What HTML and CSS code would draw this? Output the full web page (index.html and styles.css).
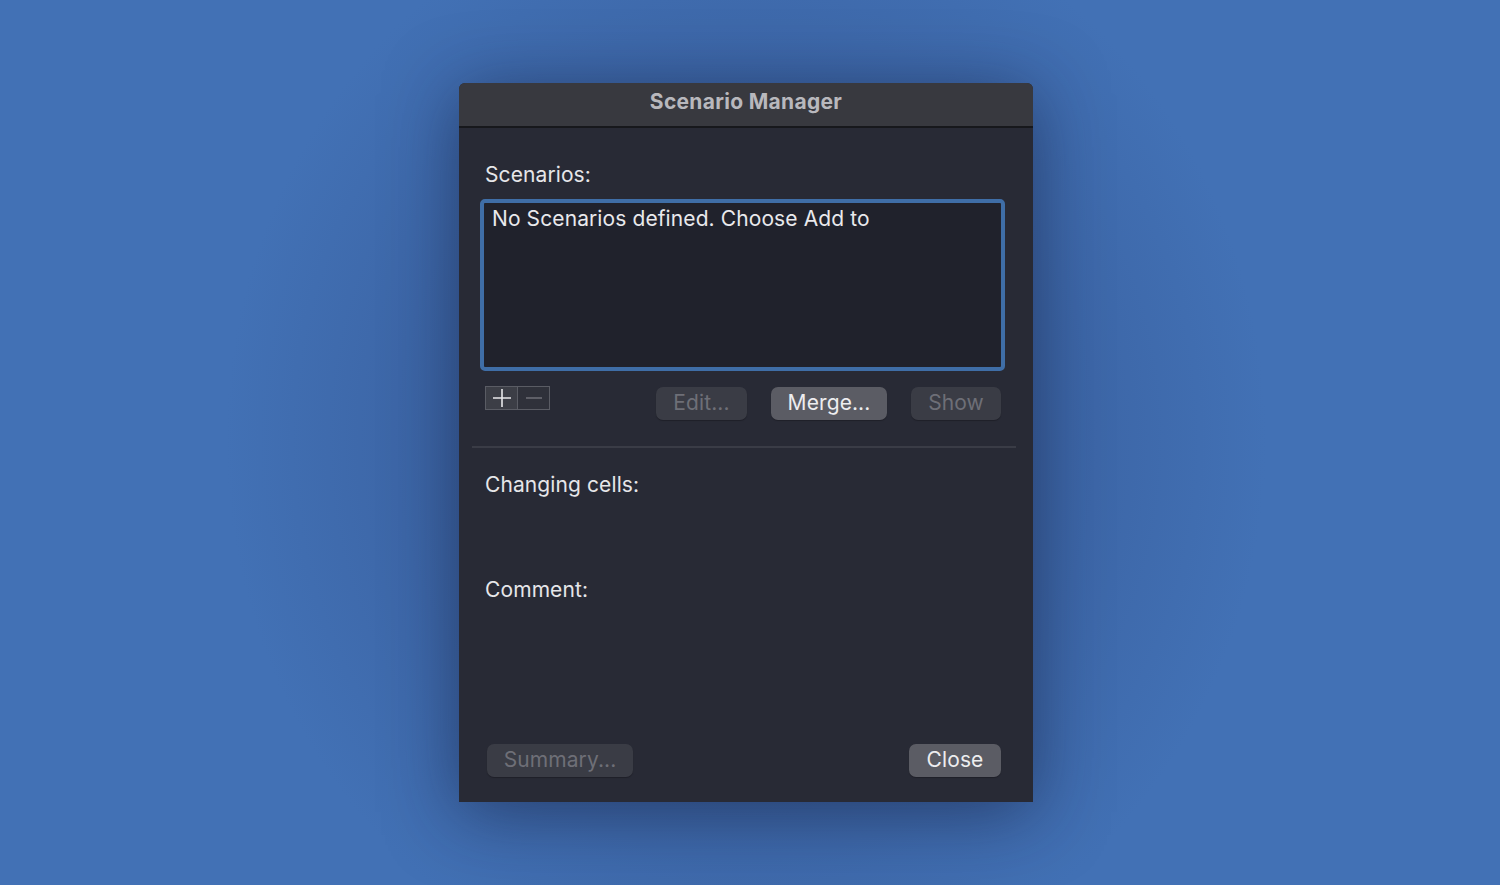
FILE: index.html
```html
<!DOCTYPE html>
<html>
<head>
<meta charset="utf-8">
<link rel="stylesheet" href="styles.css">
</head>
<body>
<div class="window">
  <div class="titlebar">Scenario Manager</div>
  <div class="content">
    <div class="label first">Scenarios:</div>
    <div class="listbox">No Scenarios defined. Choose Add to</div>
    <div class="btnrow">
      <div class="segment">
        <span class="seg seg-plus"><svg width="20" height="20" viewBox="0 0 20 20"><path d="M10 1v18M1 10h18" stroke="#e8e8ea" stroke-width="1.6" fill="none"/></svg></span>
        <span class="seg seg-minus"><svg width="20" height="20" viewBox="0 0 20 20"><path d="M2 10h16" stroke="#6b6c73" stroke-width="1.6" fill="none"/></svg></span>
      </div>
      <div class="btn disabled w-edit">Edit...</div>
      <div class="btn w-merge">Merge...</div>
      <div class="btn disabled w-show">Show</div>
    </div>
    <div class="sep"></div>
    <div class="label changing">Changing cells:</div>
    <div class="label comment">Comment:</div>
    <div class="spacer"></div>
    <div class="footer">
      <div class="btn disabled w-summary">Summary...</div>
      <div class="btn w-close">Close</div>
    </div>
  </div>
</div>
</body>
</html>
```
FILE: styles.css
```css
html, body {
  margin: 0;
  height: 100%;
}
body {
  background: radial-gradient(ellipse 520px 560px at 746px 440px, #34558c 0%, #3b63a3 55%, #4271b5 100%);
  background-color: #4271b5;
  padding: 83px 0 0 459px;
  box-sizing: border-box;
  font-family: Inter, "Noto Sans", sans-serif;
  overflow: hidden;
}
.window {
  width: 574px;
  height: 719px;
  background: #282a35;
  border-radius: 6px 6px 0 0;
  display: flex;
  flex-direction: column;
  box-shadow: 0 10px 70px rgba(20, 30, 60, 0.55);
}
.titlebar {
  height: 43px;
  background: #38393f;
  border-bottom: 2px solid #17181c;
  border-radius: 6px 6px 0 0;
  color: #b8b8bd;
  font-weight: 700;
  font-size: 21px;
  line-height: 38px;
  text-align: center;
  letter-spacing: 0.3px;
}
.content {
  flex: 1;
  display: flex;
  flex-direction: column;
  padding: 0 28px 25px 21px;
}
.label {
  color: #e6e6e9;
  font-size: 21px;
  line-height: 25px;
  padding-left: 5px;
  letter-spacing: 0.1px;
}
.label.first {
  margin-top: 34px;
}
.listbox {
  margin-top: 12px;
  height: 172px;
  box-sizing: border-box;
  border: 4px solid #3f6ea7;
  border-radius: 5px;
  background: #20222c;
  color: #e9e9ec;
  font-size: 21px;
  line-height: 25px;
  letter-spacing: 0.1px;
  padding: 3px 0 0 8px;
}
.btnrow {
  display: flex;
  align-items: flex-start;
  margin-top: 15px;
  height: 34px;
}
.segment {
  display: flex;
  margin-left: 5px;
  border: 1px solid #5a5c64;
  height: 22px;
}
.seg {
  width: 31px;
  display: flex;
  align-items: center;
  justify-content: center;
}
.seg-plus {
  background: #3c3e46;
  border-right: 1px solid #5a5c64;
}
.seg-minus {
  background: #2f313a;
}
.btn {
  height: 33px;
  box-sizing: border-box;
  border-radius: 7px;
  background: #5b5c64;
  color: #ededef;
  font-size: 21px;
  line-height: 32px;
  text-align: center;
  letter-spacing: 0.1px;
  box-shadow: 0 1px 1px rgba(0,0,0,0.25);
}
.btn.disabled {
  background: #3a3c45;
  color: #6e6f77;
}
.w-edit { width: 91px; margin-left: 106px; margin-top: 1px; }
.w-merge { width: 116px; margin-left: 24px; margin-top: 1px; }
.w-show { width: 90px; margin-left: 24px; margin-top: 1px; }
.sep {
  margin: 26px -11px 0 -8px;
  height: 2px;
  background: #3a3c46;
}
.changing {
  margin-top: 24px;
}
.comment {
  margin-top: 80px;
}
.spacer {
  flex: 1;
}
.footer {
  display: flex;
  justify-content: space-between;
  padding-left: 7px;
  padding-right: 4px;
}
.w-summary { width: 146px; }
.w-close { width: 92px; }
```
